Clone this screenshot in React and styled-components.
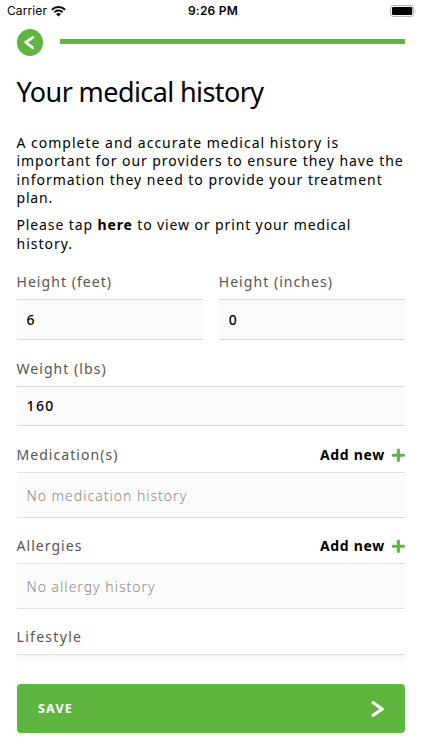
// 환자의 병력 정보를 입력하고 저장하는 화면
import React, { useState } from "react";
import styled, { createGlobalStyle } from "styled-components";

const GlobalStyle = createGlobalStyle`
    * {
        box-sizing: border-box;
    }

    body {
        margin: 0;
        background: #ffffff;
        color: #000000;
        font-family: "Noto Sans", sans-serif;
    }
`;

const Screen = styled.div`
    width: 422px;
    height: 750px;
    display: flex;
    flex-direction: column;
    overflow: hidden;
`;

const StatusBar = styled.div`
    height: 22px;
    padding: 0 5px 0 7px;
    display: grid;
    grid-template-columns: 1fr auto 1fr;
    align-items: center;
    font-family: Inter, sans-serif;
    font-size: 12px;
    line-height: 22px;
`;

const Carrier = styled.div`
    display: flex;
    align-items: center;
    gap: 4px;
    letter-spacing: 0.1px;
`;

const Clock = styled.div`
    font-weight: 600;
    letter-spacing: 0.25px;
    padding-left: 2px;
`;

const Battery = styled.svg`
    justify-self: end;
`;

const Header = styled.header`
    height: 40px;
    padding: 0 17px 0 16.6px;
    display: flex;
    align-items: center;
    gap: 17px;
`;

const BackButton = styled.button`
    width: 26.4px;
    height: 27px;
    padding: 0;
    border: none;
    border-radius: 50%;
    background: #5eb53f;
    display: flex;
    align-items: center;
    justify-content: center;
`;

const Progress = styled.div`
    flex: 1;
    height: 5px;
    margin-top: -1px;
    background: #5eb53f;
`;

const Content = styled.main`
    height: 605px;
    padding: 0 17px 0 16.5px;
`;

const TitleText = styled.h1`
    height: 71.5px;
    margin: 0;
    padding-top: 11px;
    font-size: 27px;
    font-weight: 400;
    line-height: 38px;
    letter-spacing: -0.6px;
    white-space: nowrap;
`;

const Paragraph = styled.p`
    margin: 0 0 8.5px;
    font-size: 14px;
    line-height: 18.5px;
    white-space: nowrap;
`;

const Line = styled.span`
    display: block;
    letter-spacing: ${(props) => props.$spacing || 1}px;
`;

const Form = styled.form`
    margin-top: 19.5px;
`;

const FieldRow = styled.div`
    display: flex;
    gap: 16px;
`;

const FieldGroup = styled.div`
    flex: 1;
    height: ${(props) => props.$height}px;
`;

const LabelRow = styled.div`
    height: 26px;
    display: flex;
    align-items: flex-start;
    justify-content: space-between;
    line-height: 18px;
`;

const Label = styled.label`
    color: #555555;
    font-size: 14px;
    letter-spacing: ${(props) => props.$spacing || 1.05}px;
`;

const Input = styled.input`
    display: block;
    width: 100%;
    height: ${(props) => props.$height}px;
    padding: 0 10px;
    border: solid #d8d8d8;
    border-width: 1px 0;
    border-radius: 0;
    outline: none;
    background: #fbfbfb;
    color: #000000;
    font-family: inherit;
    font-size: 14px;
    font-weight: 500;
    letter-spacing: 1.4px;
`;

const EmptyBox = styled.div`
    height: 46px;
    padding: 0 10px;
    border: solid #e0e0e0;
    border-width: 1px 0;
    background: #fbfbfb;
    color: #8a8a8a;
    font-size: 14px;
    font-weight: 300;
    line-height: 45px;
    letter-spacing: 1px;
`;

const AddButton = styled.button`
    padding: 0;
    border: none;
    background: none;
    display: flex;
    align-items: center;
    gap: 6px;
    color: #000000;
    font-family: inherit;
    font-size: 14px;
    font-weight: 700;
    line-height: 18px;
    letter-spacing: 0.7px;
`;

const FadedBox = styled.div`
    height: 13px;
    border-top: 1px solid #dcdcdc;
    background: linear-gradient(#f8f8f8, #ffffff);
`;

const Footer = styled.footer`
    padding: 17px 17px 0 16.5px;
`;

const SaveButton = styled.button`
    width: 100%;
    height: 49px;
    padding: 0 20.5px 0 21.5px;
    border: none;
    border-radius: 4px;
    background: #5eb53f;
    display: flex;
    align-items: center;
    justify-content: space-between;
    color: #ffffff;
    font-family: inherit;
    font-size: 12.5px;
    font-weight: 700;
    letter-spacing: 1.2px;
`;

function WifiIcon() {
    return (
        <svg width="15" height="11" viewBox="0 0 15 11">
            <g fill="none" stroke="#000" strokeWidth="1.9">
                <path d="M.9 3.7a9.4 9.4 0 0 1 13.2 0" />
                <path d="M3.3 6.2a6 6 0 0 1 8.4 0" />
            </g>
            <path d="M5 8.1a3.6 3.6 0 0 1 5 0l-2.5 2.5z" />
        </svg>
    );
}

function PlusIcon() {
    return (
        <svg width="14" height="14" viewBox="0 0 14 14">
            <path d="M7.4 2.1v10.4M2.1 7.3h10.4" stroke="#5eb53f" strokeWidth="3" strokeLinecap="round" />
        </svg>
    );
}

// 제목 옆에 "Add new" 버튼이 있는 기록 목록
function HistoryGroup({ label, emptyText }) {
    return (
        <FieldGroup $height={91}>
            <LabelRow>
                <Label as="span">{label}</Label>
                <AddButton type="button">
                    Add new
                    <PlusIcon />
                </AddButton>
            </LabelRow>
            <EmptyBox>{emptyText}</EmptyBox>
        </FieldGroup>
    );
}

function NumberField({ label, id, value, onChange, boxHeight = 41 }) {
    return (
        <FieldGroup $height={boxHeight + 46}>
            <LabelRow>
                <Label htmlFor={id}>{label}</Label>
            </LabelRow>
            <Input
                id={id}
                value={value}
                $height={boxHeight}
                onChange={(event) => {
                    onChange(event.target.value);
                }}
            />
        </FieldGroup>
    );
}

function App() {
    const [feet, setFeet] = useState("6");
    const [inches, setInches] = useState("0");
    const [weight, setWeight] = useState("160");

    return (
        <Screen>
            <GlobalStyle />
            <StatusBar>
                <Carrier>
                    Carrier
                    <WifiIcon />
                </Carrier>
                <Clock>9:26 PM</Clock>
                <Battery width="27" height="12" viewBox="0 0 27 12">
                    <rect x=".6" y=".6" width="23" height="10.8" rx="2.6" fill="#fff" stroke="#aaa" />
                    <rect x="2" y="2" width="20.2" height="8" rx="1.2" />
                    <path d="M25.2 4.3q1.4 1.7 0 3.4z" fill="#aaa" />
                </Battery>
            </StatusBar>
            <Header>
                <BackButton type="button" aria-label="Back">
                    <svg width="27" height="27" viewBox="0 0 27 27">
                        <path d="M16.2 8.2 8.9 13.3l7.1 5.5" fill="none" stroke="#fff" strokeWidth="2.8" strokeLinecap="round" />
                    </svg>
                </BackButton>
                <Progress />
            </Header>
            <Content>
                <TitleText>Your medical history</TitleText>
                <Paragraph>
                    <Line>A complete and accurate medical history is</Line>
                    <Line $spacing={0.93}>important for our providers to ensure they have the</Line>
                    <Line $spacing={0.97}>information they need to provide your treatment</Line>
                    <Line $spacing={0.8}>plan.</Line>
                </Paragraph>
                <Paragraph>
                    <Line $spacing={0.88}>
                        Please tap <b>here</b> to view or print your medical
                    </Line>
                    <Line>history.</Line>
                </Paragraph>
                <Form>
                    <FieldRow>
                        <NumberField label="Height (feet)" id="feet" value={feet} onChange={setFeet} />
                        <NumberField label="Height (inches)" id="inches" value={inches} onChange={setInches} />
                    </FieldRow>
                    <NumberField
                        label="Weight (lbs)"
                        id="weight"
                        value={weight}
                        onChange={setWeight}
                        boxHeight={40}
                    />
                    <HistoryGroup label="Medication(s)" emptyText="No medication history" />
                    <HistoryGroup label="Allergies" emptyText="No allergy history" />
                    <LabelRow>
                        <Label as="span" $spacing={1.3}>
                            Lifestyle
                        </Label>
                    </LabelRow>
                    <FadedBox />
                </Form>
            </Content>
            <Footer>
                <SaveButton type="button">
                    SAVE
                    <svg width="14" height="18" viewBox="0 0 14 18">
                        <path d="M2.2 2.7 11.2 9l-9 6.3" fill="none" stroke="#fff" strokeWidth="3.2" strokeLinecap="round" strokeLinejoin="round" />
                    </svg>
                </SaveButton>
            </Footer>
        </Screen>
    );
}

export default App;
